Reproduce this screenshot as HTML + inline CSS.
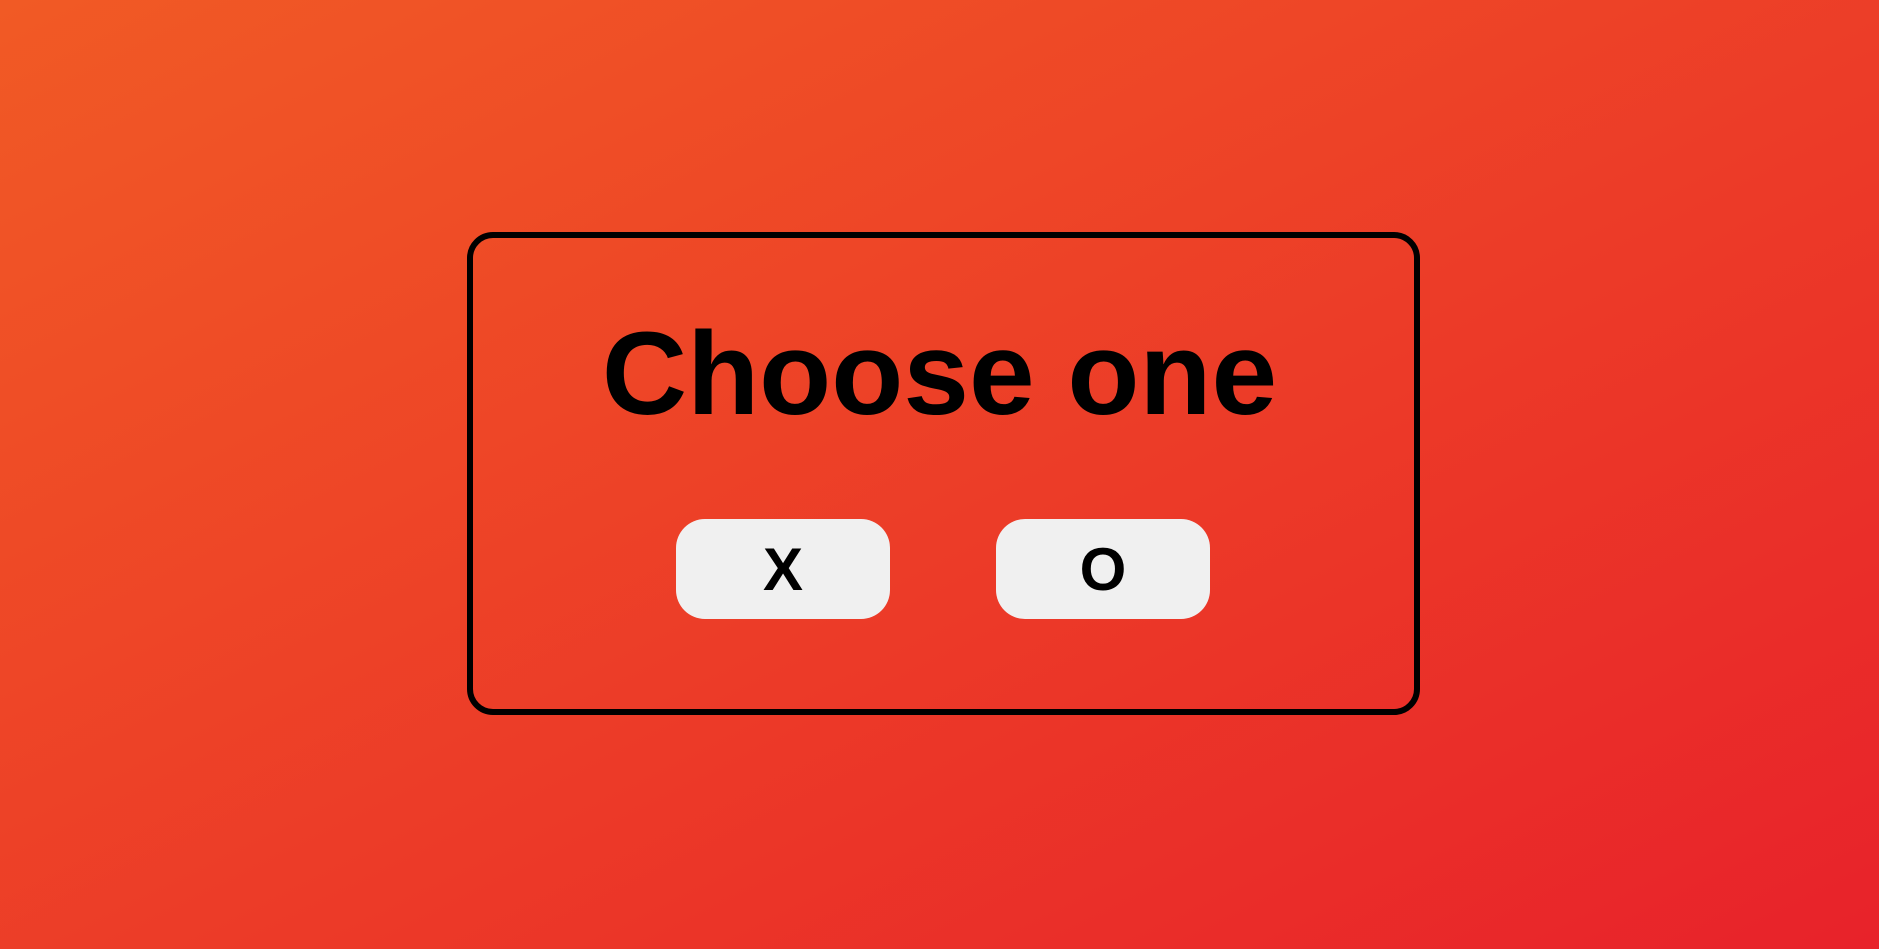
<!DOCTYPE html>
<html><head><style>
html,body{margin:0;padding:0;width:1879px;height:949px;overflow:hidden}
body{background:linear-gradient(to bottom right,#f15a25,#e8222a);font-family:"Liberation Sans",Arial,sans-serif;position:relative}
.box{position:absolute;left:467px;top:232px;width:941px;height:471px;border:6px solid #000;border-radius:26px}
h1{position:absolute;left:0;right:0;top:315px;margin:0;text-align:center;font-size:118px;font-weight:bold;line-height:1;color:#000}
.btn{position:absolute;top:519px;width:214px;height:100px;background:#f0f0f0;border-radius:29px;font-size:60px;font-weight:bold;display:flex;align-items:center;justify-content:center;color:#000}
</style></head><body>
<div class="box"></div>
<h1>Choose one</h1>
<div class="btn" style="left:676px">X</div>
<div class="btn" style="left:996px">O</div>
</body></html>
